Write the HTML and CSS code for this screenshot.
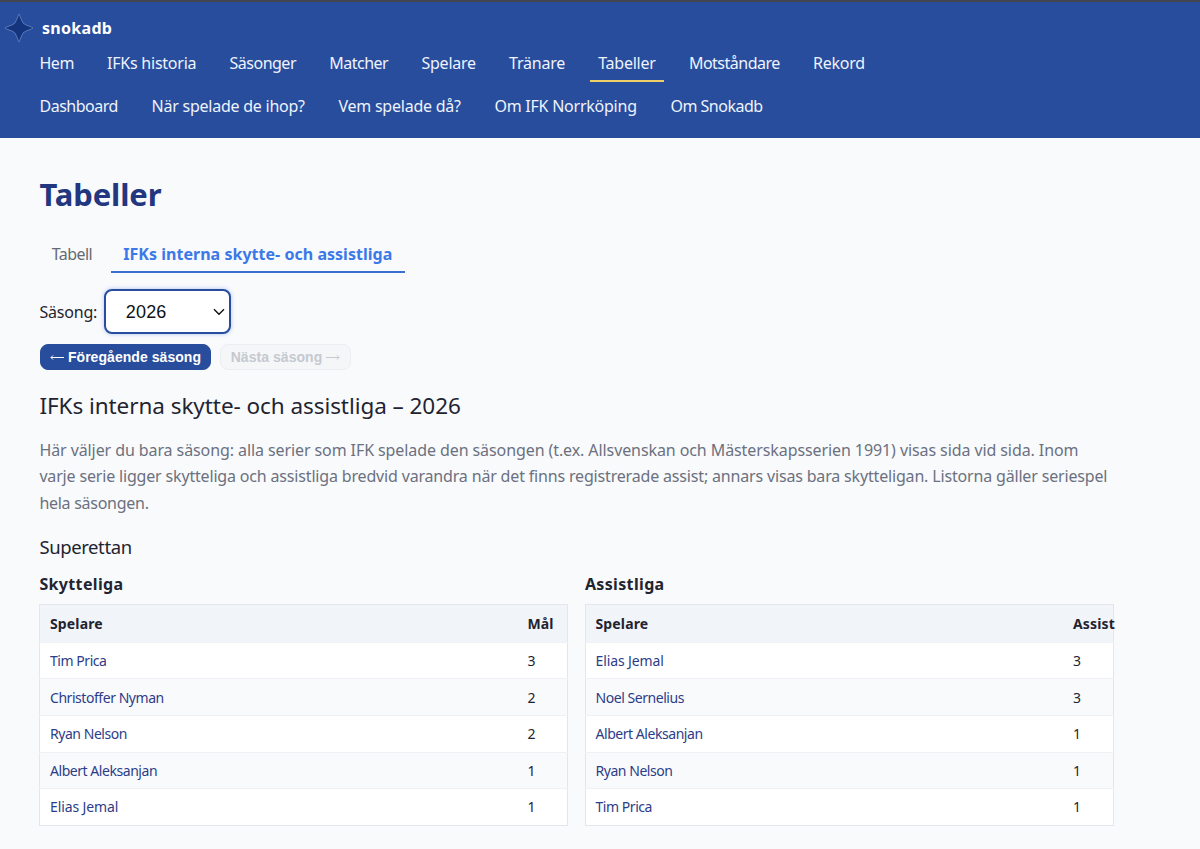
FILE: index.html
```html
<!DOCTYPE html>
<html lang="sv">
<head>
    <meta charset="UTF-8">
    <meta name="viewport" content="width=device-width, initial-scale=1.0">
    <title>Tabeller - snokadb</title>
    <link rel="stylesheet" href="styles.css">
</head>
<body>
    <header class="header">
        <a class="brand" href="#">
            <svg class="logo" viewBox="0 0 30 30" width="30" height="30">
                <path d="M15 1 C16 2.500 17 7 19.500 10.500 C23 13 27.500 13.500 29 15 C27.500 16.500 23 17 19.500 19.500 C17 23 16 27.500 15 29 C14 27.500 13 23 10.500 19.500 C7 17 2.500 16.500 1 15 C2.500 13.500 7 13 10.500 10.500 C13 7 14 2.500 15 1Z" fill="#14347d" stroke="#7391c9" stroke-width="0.700"/>
            </svg>
            <span>snokadb</span>
        </a>
        <nav class="nav">
            <div class="nav-row">
                <a href="#" class="tight">Hem</a>
                <a href="#">IFKs historia</a>
                <a href="#" class="tight">Säsonger</a>
                <a href="#" class="tight">Matcher</a>
                <a href="#">Spelare</a>
                <a href="#">Tränare</a>
                <a href="#" class="active">Tabeller</a>
                <a href="#" class="tight">Motståndare</a>
                <a href="#">Rekord</a>
            </div>
            <div class="nav-row second">
                <a href="#" class="tight">Dashboard</a>
                <a href="#">När spelade de ihop?</a>
                <a href="#">Vem spelade då?</a>
                <a href="#">Om IFK Norrköping</a>
                <a href="#" class="tight">Om Snokadb</a>
            </div>
        </nav>
    </header>

    <main class="content">
        <h1>Tabeller</h1>
        <div class="tabs">
            <a href="#" class="tab">Tabell</a>
            <a href="#" class="tab selected">IFKs interna skytte- och assistliga</a>
        </div>

        <div class="season">
            <label for="season">Säsong:</label>
            <div class="select-box">
                <select id="season">
                    <option>2026</option>
                </select>
                <svg class="chevron" viewBox="0 0 12 8" width="12" height="8">
                    <path d="M1 1.200 L6 6.200 L11 1.200" fill="none" stroke="#111" stroke-width="1.400"/>
                </svg>
            </div>
        </div>
        <div class="buttons">
            <button class="prev"><svg viewBox="0 0 14 8" width="14" height="8"><path d="M14 4.500H1M3 2.500L1 4.500L3 6.500"/></svg>Föregående säsong</button>
            <button class="next" disabled>Nästa säsong<svg viewBox="0 0 14 8" width="14" height="8"><path d="M0 4.500H13M11 2.500L13 4.500L11 6.500"/></svg></button>
        </div>

        <h2>IFKs interna skytte- och assistliga – 2026</h2>
        <p class="intro">
            <span class="l1">Här väljer du bara säsong: alla serier som IFK spelade den säsongen (t.ex. Allsvenskan och Mästerskapsserien 1991) visas sida vid sida. Inom</span><br>
            <span class="l2">varje serie ligger skytteliga och assistliga bredvid varandra när det finns registrerade assist; annars visas bara skytteligan. Listorna gäller seriespel</span><br>
            <span class="l3">hela säsongen.</span>
        </p>

        <h3>Superettan</h3>
        <div class="leagues">
            <section>
                <h4>Skytteliga</h4>
                <table>
                    <thead><tr><th>Spelare</th><th class="num">Mål</th></tr></thead>
                    <tbody>
                        <tr><td><a href="#">Tim Prica</a></td><td>3</td></tr>
                        <tr><td><a href="#">Christoffer Nyman</a></td><td>2</td></tr>
                        <tr><td><a href="#">Ryan Nelson</a></td><td>2</td></tr>
                        <tr><td><a href="#">Albert Aleksanjan</a></td><td>1</td></tr>
                        <tr><td><a href="#" class="wide">Elias Jemal</a></td><td>1</td></tr>
                    </tbody>
                </table>
            </section>
            <section>
                <h4>Assistliga</h4>
                <table>
                    <thead><tr><th>Spelare</th><th class="num">Assist</th></tr></thead>
                    <tbody>
                        <tr><td><a href="#" class="wide">Elias Jemal</a></td><td>3</td></tr>
                        <tr><td><a href="#">Noel Sernelius</a></td><td>3</td></tr>
                        <tr><td><a href="#">Albert Aleksanjan</a></td><td>1</td></tr>
                        <tr><td><a href="#">Ryan Nelson</a></td><td>1</td></tr>
                        <tr><td><a href="#">Tim Prica</a></td><td>1</td></tr>
                    </tbody>
                </table>
            </section>
        </div>
    </main>
</body>
</html>
```
FILE: styles.css
```css
*{
    box-sizing: border-box;
}
body{
    margin: 0;
    background: #f9fafc;
    color: #1f2430;
    font-family: Tahoma, "Noto Sans", sans-serif;
    font-size: 16px;
    overflow: hidden;
}
a{
    text-decoration: none;
    color: inherit;
}
h1, h2, h3, h4, p{
    margin: 0;
    white-space: nowrap;
}
.header{
    height: 138px;
    padding-top: 11px;
    background: #284d9d;
    border-top: 2px solid #44464f;
    color: #eef3fc;
}
.brand{
    display: flex;
    align-items: center;
    gap: 8px;
    height: 30px;
    padding-left: 4px;
    color: white;
    font-weight: bold;
    letter-spacing: 0.3px;
}
.nav{
    padding-left: 31.500px;
}
.nav-row{
    display: flex;
    gap: 17.250px;
    height: 43px;
}
.nav-row.second{
    gap: 17.700px;
}
.nav-row a{
    height: 39px;
    padding: 0 8px;
    line-height: 40px;
    letter-spacing: -0.24px;
    white-space: nowrap;
}
.nav-row .tight{
    letter-spacing: -0.5px;
}
.nav-row .active{
    border-bottom: 2px solid #f0cf68;
}
.content{
    padding: 36px 40px 0 39.400px;
}
h1{
    color: #233680;
    font-size: 31px;
    line-height: 40px;
    letter-spacing: -0.1px;
}
.tabs{
    display: flex;
    gap: 6.500px;
    margin-top: 22px;
}
.tab{
    height: 37px;
    padding: 0 12.300px;
    line-height: 36px;
    color: #666a70;
    letter-spacing: -0.55px;
}
.tab.selected{
    color: #3b78e8;
    font-weight: bold;
    letter-spacing: 0.030px;
    border-bottom: 2px solid #3c70cf;
}
.season{
    display: flex;
    align-items: center;
    gap: 6.600px;
    margin-top: 16px;
    height: 45px;
    letter-spacing: -0.2px;
}
.select-box{
    position: relative;
}
select{
    display: block;
    appearance: none;
    width: 127px;
    height: 45px;
    padding: 0 20px;
    border: 2px solid #284d9d;
    border-radius: 8px;
    background: white;
    box-shadow: 0 0 4px rgba(60,110,220,0.4);
    color: #111;
    font-family: "Liberation Sans", sans-serif;
    font-size: 18px;
    letter-spacing: 0.2px;
}
.chevron{
    position: absolute;
    right: 6px;
    top: 19px;
}
.buttons{
    display: flex;
    gap: 9px;
    margin-top: 10px;
    padding-left: 0.600px;
}
button{
    display: flex;
    align-items: center;
    justify-content: center;
    gap: 4px;
    height: 26px;
    padding: 0;
    border: 1px solid #284d9d;
    border-radius: 8px;
    background: #284d9d;
    color: white;
    font: bold 14px "Liberation Sans", sans-serif;
    letter-spacing: 0.050px;
    white-space: nowrap;
}
button path{
    fill: none;
    stroke: currentColor;
    stroke-width: 1;
}
.prev{
    width: 171px;
}
.next{
    width: 131px;
    background: #f5f6f8;
    border-color: #eceef1;
    color: #c5c9d0;
}
h2{
    margin-top: 20px;
    font-size: 22.500px;
    font-weight: normal;
    line-height: 32px;
    letter-spacing: -0.060px;
}
.intro{
    margin-top: 14.600px;
    line-height: 26.600px;
    color: #6b7180;
}
.l1{
    letter-spacing: -0.090px;
}
.l2{
    letter-spacing: -0.170px;
}
.l3{
    letter-spacing: -0.270px;
}
h3{
    margin-top: 17px;
    font-size: 18.500px;
    font-weight: normal;
    line-height: 28px;
    letter-spacing: -0.4px;
}
.leagues{
    display: grid;
    grid-template-columns: 529px 529px;
    gap: 16.500px;
    margin-top: 10.400px;
}
h4{
    font-size: 16px;
    line-height: 24px;
    margin-bottom: 8px;
    letter-spacing: 0.35px;
}
table{
    width: 100%;
    table-layout: fixed;
    border-collapse: collapse;
    border: 1px solid #e3e7ed;
    background: white;
    font-size: 14px;
}
th, td{
    height: 36.600px;
    padding: 0 10px 0 9.600px;
    text-align: left;
    white-space: nowrap;
    border-bottom: 1px solid #eff1f5;
}
th{
    height: 38px;
    background: #f1f4f9;
    letter-spacing: 0.15px;
}
tbody tr:last-child td{
    border-bottom-color: #e3e7ed;
}
.num{
    width: 50px;
}
td a{
    color: #2c3d88;
    letter-spacing: -0.450px;
}
td .wide{
    letter-spacing: -0.1px;
}
tbody tr:nth-child(even){
    background: #f9fafc;
}
```
